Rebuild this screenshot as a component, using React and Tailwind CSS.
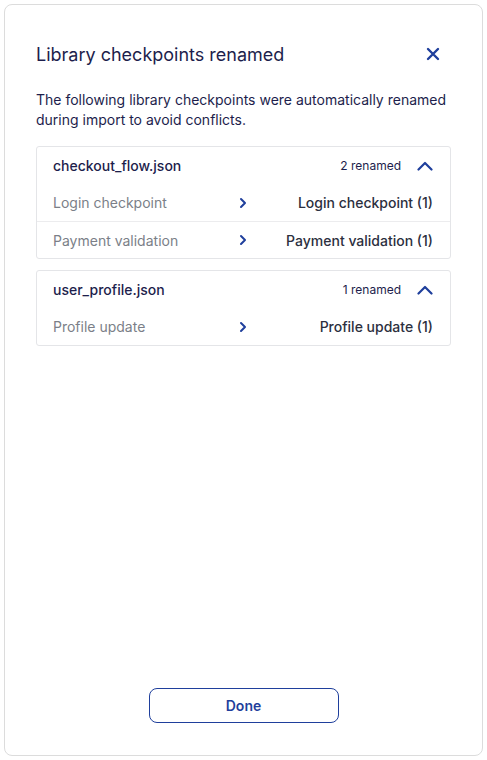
const groups = [
  {
    file: "checkout_flow.json",
    items: [
      { from: "Login checkpoint", to: "Login checkpoint (1)" },
      { from: "Payment validation", to: "Payment validation (1)" },
    ],
  },
  {
    file: "user_profile.json",
    items: [{ from: "Profile update", to: "Profile update (1)" }],
  },
];

function CloseIcon() {
  return (
    <svg width="14" height="14" viewBox="0 0 14 14" fill="none" stroke="currentColor" strokeWidth="2.4" strokeLinecap="round">
      <path d="M2 2l10 10M12 2L2 12" />
    </svg>
  );
}

function ChevronUp() {
  return (
    <svg width="16" height="10" viewBox="0 0 16 10" fill="none" stroke="currentColor" strokeWidth="2.2" strokeLinecap="round" strokeLinejoin="round">
      <path d="M1.5 8.5L8 2l6.5 6.5" />
    </svg>
  );
}

function ChevronRight() {
  return (
    <svg width="8" height="12" viewBox="0 0 8 12" fill="none" stroke="currentColor" strokeWidth="2" strokeLinecap="round" strokeLinejoin="round">
      <path d="M2 2l4 4-4 4" />
    </svg>
  );
}

function FileGroup({ group }) {
  const count = group.items.length;
  return (
    <div className="border border-[#e4e5e8] rounded-[3px]">
      <div className="h-[37px] flex items-center justify-between pl-4 pr-[17px]">
        <span className="text-[14px] font-medium text-[#1d1e4c]">{group.file}</span>
        <div className="flex items-center gap-4">
          <span className="text-[12px] text-[#1d1e4c]">{count} renamed</span>
          <span className="w-4 flex justify-center text-[#1f3f9c]">
            <ChevronUp />
          </span>
        </div>
      </div>
      {group.items.map((item, i) => (
        <div
          key={i}
          className={
            "h-[37px] grid grid-cols-[1fr_auto_1fr] items-center pl-4 pr-[17px] text-[14px] " +
            (i > 0 ? "border-t border-[#ececee]" : "")
          }
        >
          <span className="text-[#7b7f88]">{item.from}</span>
          <span className="text-[#1f3f9c] flex">
            <ChevronRight />
          </span>
          <span className="text-right font-medium text-[#2c2f3e]">{item.to}</span>
        </div>
      ))}
    </div>
  );
}

export default function App() {
  return (
    <div className="p-1 bg-white" style={{ fontFamily: "Inter, 'Noto Sans', sans-serif" }}>
      <div className="h-[752px] border border-[#dcdcdc] rounded-lg bg-white flex flex-col px-[31px] pt-[31px] pb-8">
        <div className="h-9 flex items-center justify-between">
          <h2 className="text-[18px] text-[#1d1e4c]">Library checkpoints renamed</h2>
          <button className="w-9 h-9 flex items-center justify-center text-[#1f3f9c]">
            <CloseIcon />
          </button>
        </div>
        <p className="mt-[18px] text-[14px] leading-5 text-[#1d1e4c]">
          The following library checkpoints were automatically renamed during import to avoid conflicts.
        </p>
        <div className="mt-4 flex flex-col gap-[11px]">
          {groups.map((g) => (
            <FileGroup key={g.file} group={g} />
          ))}
        </div>
        <div className="flex-1" />
        <div className="flex justify-center">
          <button className="w-[190px] h-[35px] border border-[#1f3f9c] rounded-lg text-[14px] font-semibold text-[#1f3f9c]">
            Done
          </button>
        </div>
      </div>
    </div>
  );
}
